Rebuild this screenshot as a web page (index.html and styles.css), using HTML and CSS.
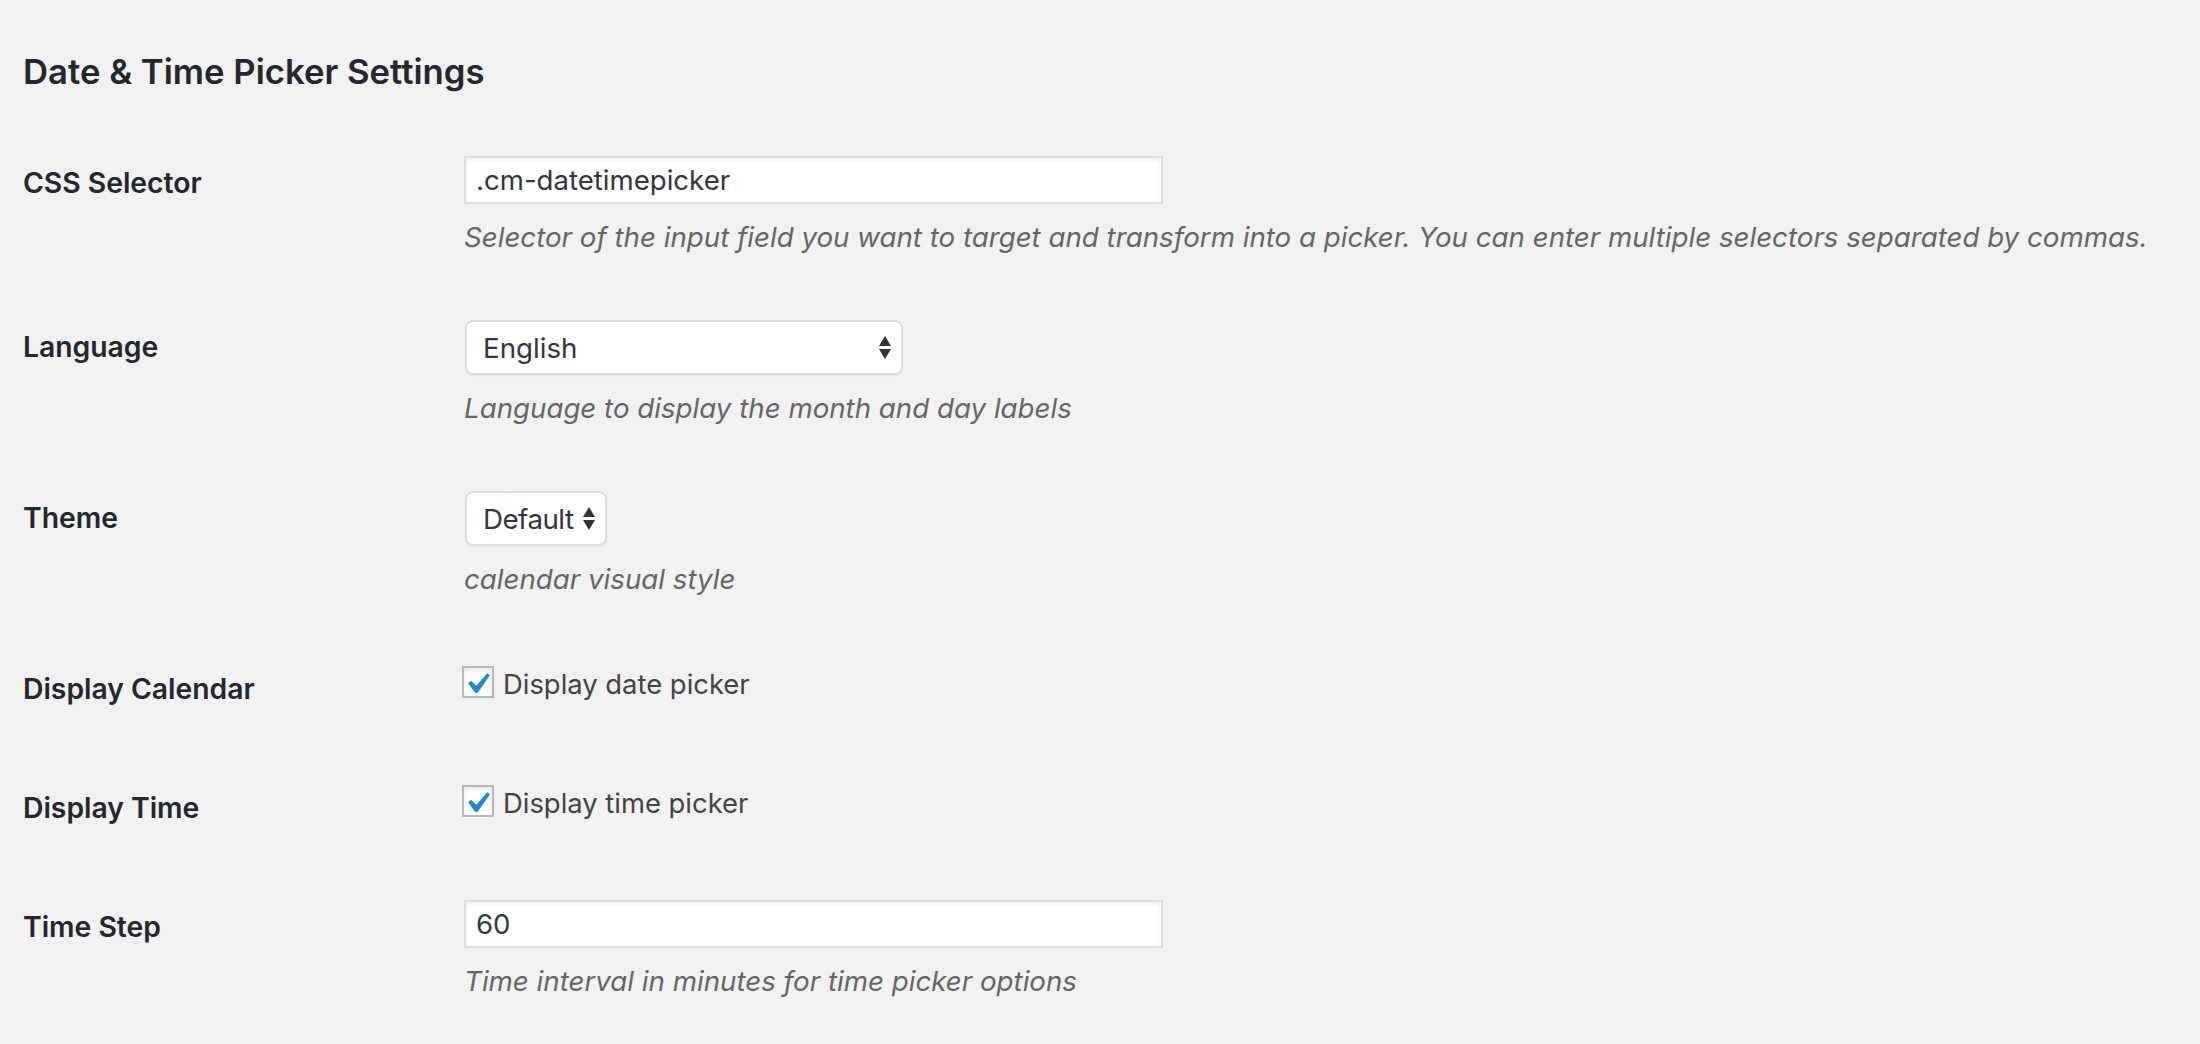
FILE: index.html
```html
<!DOCTYPE html>
<html lang="en">
<head>
<meta charset="utf-8">
<title>Date &amp; Time Picker Settings</title>
<link rel="stylesheet" href="styles.css">
</head>
<body>
<div class="wrap">
  <h2 class="title">Date &amp; Time Picker Settings</h2>
  <div class="form-table">
    <div class="row">
      <div class="th"><label for="sel">CSS Selector</label></div>
      <div class="td">
        <input id="sel" class="regular-text" type="text" value=".cm-datetimepicker">
        <p class="description">Selector of the input field you want to target and transform into a picker. You can enter multiple selectors separated by commas.</p>
      </div>
    </div>
    <div class="row">
      <div class="th"><label>Language</label></div>
      <div class="td">
        <div class="select select-wide">
          <span class="select-value">English</span>
          <svg class="arrows" width="12" height="23" viewBox="0 0 12 23"><polygon points="0,10 12,10 6,0"/><polygon points="0,13 12,13 6,23"/></svg>
        </div>
        <p class="description">Language to display the month and day labels</p>
      </div>
    </div>
    <div class="row">
      <div class="th"><label>Theme</label></div>
      <div class="td">
        <div class="select select-narrow">
          <span class="select-value">Default</span>
          <svg class="arrows" width="12" height="23" viewBox="0 0 12 23"><polygon points="0,10 12,10 6,0"/><polygon points="0,13 12,13 6,23"/></svg>
        </div>
        <p class="description">calendar visual style</p>
      </div>
    </div>
    <div class="row row-check">
      <div class="th"><label>Display Calendar</label></div>
      <div class="td">
        <label class="check">
          <span class="cb" role="checkbox" aria-checked="true"><svg width="28" height="28" viewBox="3.8 2.4 13.34 13.34"><path d="M14.83 4.89l1.34.94-5.81 8.38H9.02L5.78 9.67l1.34-1.25 2.57 2.4z"/></svg></span>
          <span class="check-text">Display date picker</span>
        </label>
      </div>
    </div>
    <div class="row row-check">
      <div class="th"><label>Display Time</label></div>
      <div class="td">
        <label class="check">
          <span class="cb" role="checkbox" aria-checked="true"><svg width="28" height="28" viewBox="3.8 2.4 13.34 13.34"><path d="M14.83 4.89l1.34.94-5.81 8.38H9.02L5.78 9.67l1.34-1.25 2.57 2.4z"/></svg></span>
          <span class="check-text">Display time picker</span>
        </label>
      </div>
    </div>
    <div class="row">
      <div class="th"><label for="step">Time Step</label></div>
      <div class="td">
        <input id="step" class="regular-text" type="text" value="60">
        <p class="description">Time interval in minutes for time picker options</p>
      </div>
    </div>
  </div>
</div>
</body>
</html>
```
FILE: styles.css
```css
html, body {
  margin: 0;
  padding: 0;
  background: #f1f1f1;
}
body {
  font-family: Inter, "Noto Sans", sans-serif;
  color: #444;
}
.wrap {
  padding: 49px 0 0 23px;
}
.title {
  margin: 0;
  font-size: 34.7px;
  line-height: 44px;
  font-weight: 600;
  color: #23282d;
}
.form-table {
  margin-top: 32px;
}
.row {
  display: grid;
  grid-template-columns: 441px 1fr;
}
.th {
  padding-top: 40px;
  font-size: 28.3px;
  line-height: 36px;
  font-weight: 600;
  color: #23282d;
}
.td {
  padding: 31px 0 32px;
}
.row-check .td {
  padding: 31px 0 48px;
}
.regular-text {
  display: block;
  box-sizing: border-box;
  width: 699px;
  height: 48px;
  margin: 0;
  padding: 0 10px;
  border: 2px solid #ddd;
  box-shadow: inset 0 2px 4px rgba(0, 0, 0, 0.07);
  background: #fff;
  font-family: Inter, "Noto Sans", sans-serif;
  font-size: 27.6px;
  color: #32373c;
  outline: none;
}
.description {
  margin: 14px 0 0;
  font-size: 27.7px;
  line-height: 39px;
  font-style: italic;
  color: #666;
  white-space: nowrap;
}
.select {
  display: flex;
  align-items: center;
  justify-content: space-between;
  box-sizing: border-box;
  height: 55px;
  margin-left: 1px;
  padding: 0 10px 0 16px;
  border: 2px solid #ddd;
  border-radius: 8px;
  background: #fff;
  box-shadow: 0 1px 2px rgba(0, 0, 0, 0.05);
  font-size: 27.7px;
  color: #32373c;
}
.select-wide {
  width: 438px;
}
.select-narrow {
  width: 142px;
}
.select-narrow .select-value {
  letter-spacing: -0.5px;
}
.arrows {
  fill: #333;
  flex: none;
}
.check {
  display: flex;
  align-items: center;
  height: 40px;
  gap: 9px;
  margin-left: -2px;
  font-size: 27.4px;
  color: #444;
}
.cb {
  display: flex;
  align-items: center;
  justify-content: center;
  box-sizing: border-box;
  width: 32px;
  height: 32px;
  border: 2px solid #b4b9be;
  background: #fff;
  box-shadow: inset 0 2px 4px rgba(0, 0, 0, 0.1);
}
.cb svg {
  fill: #1e8cbe;
}
.check-text {
  padding-top: 4px;
}
```
